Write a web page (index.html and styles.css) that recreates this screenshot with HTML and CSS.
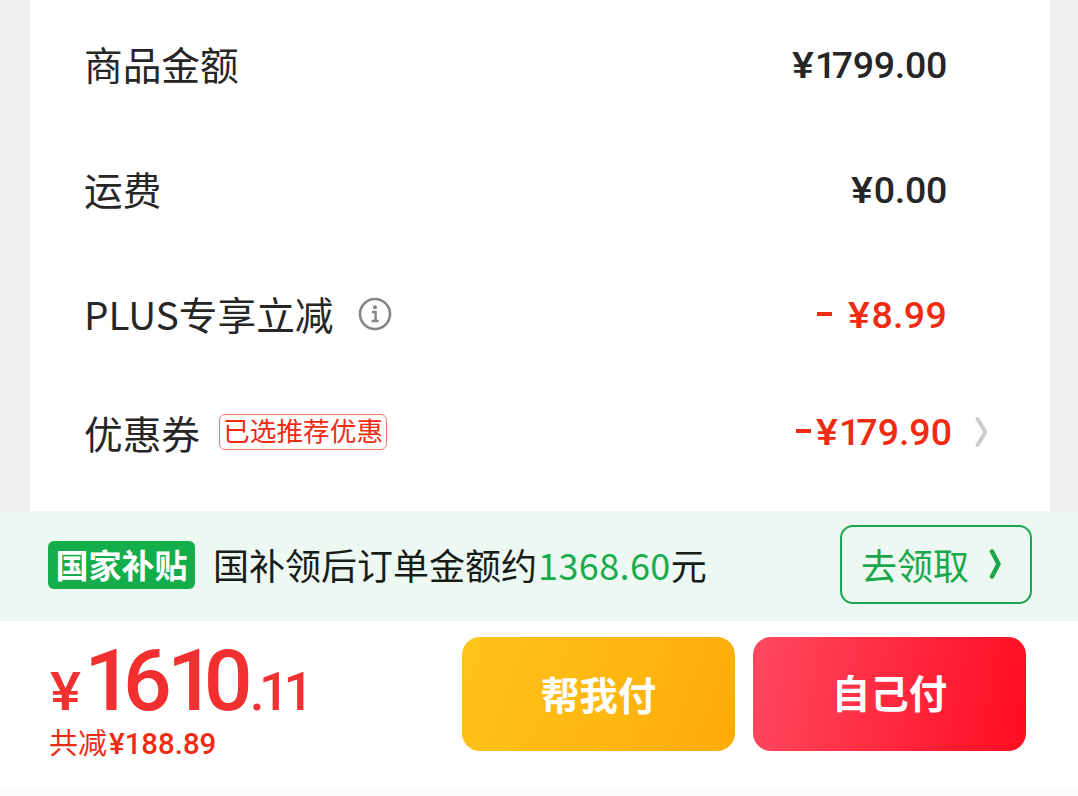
FILE: index.html
```html
<!DOCTYPE html>
<html lang="zh-CN">
<head>
<meta charset="utf-8">
<title>订单结算</title>
<link rel="stylesheet" href="styles.css">
</head>
<body>
<main class="page">
  <section class="card">
    <div class="row">
      <span class="label">商品金额</span>
      <span class="amount goods"><span class="sign">¥</span><span class="one">1</span>799.00</span>
    </div>
    <div class="row">
      <span class="label">运费</span>
      <span class="amount"><span class="sign">¥</span>0.00</span>
    </div>
    <div class="row">
      <span class="label plus">PLUS专享立减</span>
      <svg class="info" viewBox="0 0 34 34" width="34" height="34">
        <circle cx="17" cy="17" r="15" fill="none" stroke="#858585" stroke-width="2.6"/>
        <circle cx="17" cy="10.3" r="2" fill="#858585"/>
        <path d="M14 15h3.6v8.5M13.6 24h7" fill="none" stroke="#858585" stroke-width="2.4"/>
      </svg>
      <span class="amount discount"><i class="minus"></i><span class="sign">¥</span>8.99</span>
    </div>
    <div class="row coupon">
      <span class="label">优惠券</span>
      <span class="tag">已选推荐优惠</span>
      <span class="amount discount"><i class="minus"></i><span class="sign">¥</span><span class="one">1</span>79.90</span>
      <svg class="chevron" viewBox="0 0 14 32" width="14" height="32">
        <path d="M2.5 3 10.5 16 2.5 29" fill="none" stroke="#ccc" stroke-width="4" stroke-linejoin="round" stroke-linecap="round"/>
      </svg>
    </div>
  </section>

  <section class="subsidy">
    <span class="badge">国家补贴</span>
    <span class="message">国补领后订单金额约<b class="estimate">1368.60</b>元</span>
    <button class="claim">
      <span class="claim-text">去领取</span>
      <svg viewBox="0 0 14 32" width="14" height="32">
        <path d="M3 3.5 9.5 16 3 28.5" fill="none" stroke="#17a84b" stroke-width="4.5" stroke-linejoin="round" stroke-linecap="round"/>
      </svg>
    </button>
  </section>

  <footer class="checkout">
    <div class="total">
      <div class="price"><span class="yen">¥</span><span class="whole"><span class="first">1</span><span class="six">6</span><span class="second">1</span><span class="zero">0</span></span><span class="cents">.11</span></div>
      <div class="saved">共减<b>¥188.89</b></div>
    </div>
    <button class="pay friend"><span>帮我付</span></button>
    <button class="pay self"><span>自己付</span></button>
  </footer>
</main>
</body>
</html>
```

FILE: styles.css
```css
* { box-sizing: border-box; }

body {
  margin: 0;
  background: #f0f0f0;
  color: #262626;
  font-family: "Noto Sans CJK SC", sans-serif;
}

button {
  font-family: inherit;
  cursor: pointer;
}

.page {
  width: 1078px;
  height: 796px;
  overflow: hidden;
  background: #fbfbfb;
}

.card {
  height: 511px;
  padding: 2px 103px 0 54px;
  border: solid #f0f0f0;
  border-width: 0 28px 0 30px;
  background: #fff;
}

.row {
  display: flex;
  align-items: center;
  height: 125px;
}

.label {
  margin-top: -4px;
  font-size: 38.7px;
  line-height: 56px;
  white-space: nowrap;
}

.info { margin: -2px 0 0 24px; }

.amount {
  display: flex;
  align-items: center;
  margin-left: auto;
  font: 500 37.5px/56px Roboto, sans-serif;
  letter-spacing: -0.3px;
  white-space: nowrap;
}

.sign {
  margin-right: 3px;
  transform: scaleX(1.1);
  transform-origin: left;
}

.one { letter-spacing: -4.5px; }

.discount {
  color: #f02b14;
  letter-spacing: 0.3px;
}

.minus {
  width: 15px;
  height: 4px;
  margin: -2px 16px 0 0;
  background: currentColor;
}

.coupon {
  height: 109px;
  margin-right: -42px;
}

.coupon .label { margin-top: 0; }
.coupon .amount { letter-spacing: 0; }
.coupon .one { letter-spacing: -4px; }
.coupon .minus { margin-right: 5px; }
.coupon .chevron { margin-left: 23px; }

.tag {
  height: 36px;
  margin-left: 19px;
  padding: 0 3px;
  border: 1px solid #f0776a;
  border-radius: 6px;
  color: #f02b14;
  font-size: 26.7px;
  line-height: 30px;
  white-space: nowrap;
}

.subsidy {
  display: flex;
  align-items: center;
  height: 110px;
  padding: 0 46px 2px 48px;
  background: #edf8f2;
}

.badge {
  width: 147px;
  height: 48px;
  border-radius: 6px;
  background: #13ad4b;
  color: #fff;
  font-size: 33px;
  font-weight: 700;
  line-height: 46px;
  text-align: center;
  white-space: nowrap;
}

.message {
  margin: -2px 0 0 18px;
  color: #171c19;
  font-size: 36px;
  line-height: 52px;
  white-space: nowrap;
}

.estimate {
  margin-left: 1px;
  color: #17ad4c;
  font-weight: 400;
  letter-spacing: 0.4px;
}

.claim {
  display: flex;
  align-items: center;
  gap: 20px;
  width: 192px;
  height: 79px;
  margin: -2px 0 0 auto;
  padding: 0 0 0 19px;
  border: 2px solid #1ea651;
  border-radius: 13px;
  background: transparent;
  color: #17a84b;
  font-size: 36px;
}

.claim-text { margin-top: -1px; }

.checkout {
  display: flex;
  height: 166px;
  padding: 16px 52px 0 49px;
  background: #fff;
}

.total {
  width: 413px;
  color: #f23030;
}

.price {
  height: 84px;
  font: 500 53px/87px Roboto, sans-serif;
  white-space: nowrap;
}

.yen {
  display: inline-block;
  margin: 0 6px 0 1px;
  transform: scaleX(1.1);
  transform-origin: left;
}

.whole { font-size: 86px; }
.first { letter-spacing: -10px; }
.six { letter-spacing: -5px; }
.second { letter-spacing: -12px; }
.zero { letter-spacing: -3px; }
.cents { letter-spacing: -5.5px; }

.saved {
  color: #f02b14;
  font-size: 29px;
  line-height: 40px;
}

.saved b {
  margin-left: 2px;
  font: 500 29.4px Roboto, sans-serif;
}

.pay {
  width: 273px;
  height: 114px;
  padding: 0 0 3px;
  border: 0;
  border-radius: 18px;
  color: #fff;
  font-size: 38.5px;
  font-weight: 700;
}

.friend { background: linear-gradient(110deg, #ffc41b, #ffab08); }

.self {
  margin-left: 18px;
  padding-bottom: 6px;
  background: linear-gradient(100deg, #ff4960, #ff0c20);
}
```
